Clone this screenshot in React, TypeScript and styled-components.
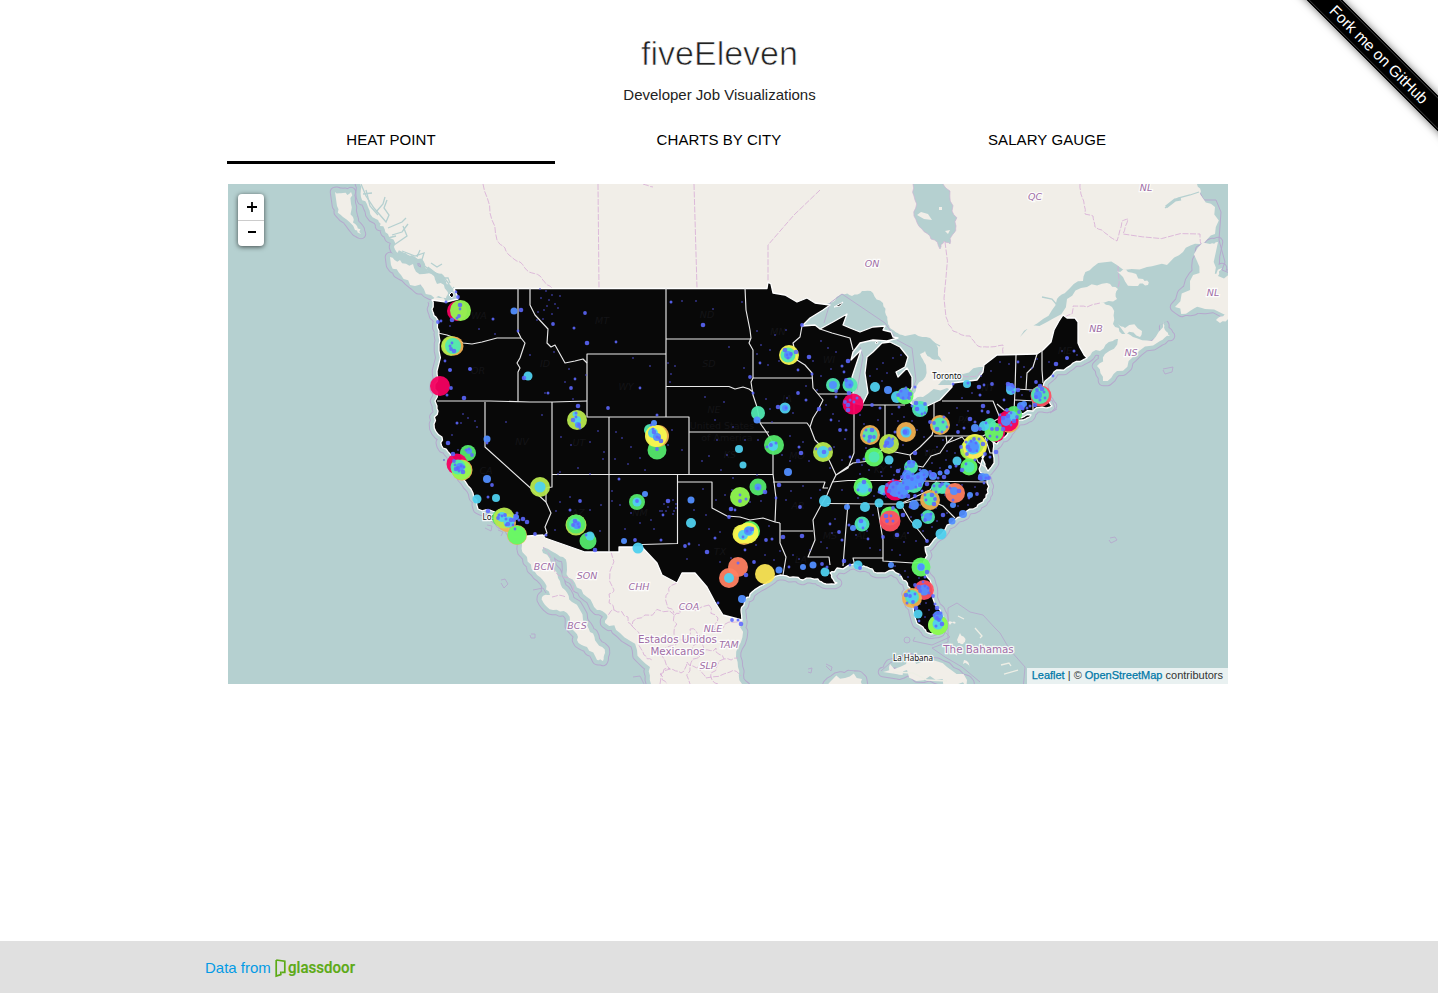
import React from 'react';
import styled, { createGlobalStyle } from 'styled-components';

const GlobalStyle = createGlobalStyle`
  * { box-sizing: border-box; }
  body {
    margin: 0;
    background: #fff;
    color: #222;
    font-family: "Liberation Sans", Arial, sans-serif;
    overflow: hidden;
  }
`;

const Page = styled.div`
  position: relative;
  display: flex;
  flex-direction: column;
  height: 993px;
  overflow: hidden;
`;

const Header = styled.header`
  display: flex;
  flex-direction: column;
  align-items: center;
  padding: 32px 0 0 1px;
`;

const Title = styled.h1`
  margin: 0;
  font-size: 34px;
  font-weight: 300;
  line-height: 42px;
  -webkit-text-stroke: 0.7px #fff;
`;

const Subtitle = styled.p`
  margin: 11px 0 0;
  font-size: 15px;
  line-height: 20px;
`;

const Tabs = styled.nav`
  display: flex;
  width: 984px;
  height: 48px;
  margin: 11px auto 0;
`;

const Tab = styled.a<{ $active?: boolean }>`
  flex: 1;
  text-align: center;
  font-size: 15px;
  letter-spacing: 0.08px;
  line-height: 48px;
  color: #000;
  border-bottom: 3px solid ${(p) => (p.$active ? '#000' : 'transparent')};
`;

const MapPanel = styled.main`
  position: relative;
  width: 1000px;
  height: 500px;
  margin: 20px 0 0 228px;
  overflow: hidden;
  background: #b5d0d0;
`;

const MapDrawing = styled.svg`
  display: block;
  width: 1000px;
  height: 500px;
`;

const ZoomControl = styled.div`
  position: absolute;
  left: 10px;
  top: 10px;
  width: 26px;
  border-radius: 4px;
  background: #fff;
  box-shadow: 0 1px 5px rgba(0, 0, 0, 0.65);
`;

const ZoomButton = styled.div`
  display: flex;
  align-items: center;
  justify-content: center;
  height: 26px;
  padding-left: 1px;
  color: #000;
  & + & {
    border-top: 1px solid #ccc;
    margin-top: -0.5px;
  }
`;

const Attribution = styled.div`
  position: absolute;
  right: 0;
  bottom: 0;
  height: 16px;
  padding: 0 5px;
  background: rgba(255, 255, 255, 0.7);
  color: #333;
  font-size: 11px;
  line-height: 15px;
  white-space: nowrap;
`;

const MapLink = styled.a`
  color: #0078a8;
  -webkit-text-stroke: 0.25px #0078a8;
`;

const Footer = styled.footer`
  display: flex;
  align-items: center;
  height: 52px;
  margin-top: auto;
  padding: 1px 0 0 205px;
  background: #e0e0e0;
  color: #039be5;
  font-size: 15px;
`;

const Logo = styled.svg`
  width: 82px;
  height: 22px;
  margin: 1px 0 0 4px;
`;

const RibbonFrame = styled.div`
  position: absolute;
  top: 0;
  right: 0;
  width: 150px;
  height: 150px;
  overflow: hidden;
`;

const Ribbon = styled.a`
  position: absolute;
  left: -22px;
  top: 42px;
  width: 226px;
  height: 25px;
  transform: rotate(45deg);
  background: #000;
  border: 1px solid #000;
  box-shadow: 0 0 9px rgba(0, 0, 0, 0.6), inset 0 0 0 1px #383838;
  color: #fff;
  font-size: 15.600px;
  line-height: 24px;
  text-align: center;
`;

type Pt = [number, number];
const pts = (s: string): Pt[] => s.trim().split(/\s+/).map((q) => q.split(',').map(Number) as Pt);

const noise = (x: number, y: number) => {
  const v = Math.sin(x * 12.9898 + y * 78.233) * 43758.5453;
  return (v - Math.floor(v)) * 2 - 1;
};

/* Adds two levels of displaced midpoints so that shorelines look natural. */
const crag = (s: string, amount = 0.2): string => {
  let line = pts(s);
  for (let pass = 0; pass < 2; pass += 1) {
    const next: Pt[] = [line[0]];
    for (let i = 1; i < line.length; i += 1) {
      const [ax, ay] = line[i - 1];
      const [bx, by] = line[i];
      const k = noise(ax + bx, ay + by) * amount;
      next.push([(ax + bx) / 2 - (by - ay) * k, (ay + by) / 2 + (bx - ax) * k], [bx, by]);
    }
    line = next;
  }
  return line.map(([x, y]) => `${x.toFixed(1)},${y.toFixed(1)}`).join(' ');
};

const BC = crag('357,170 360,184 361,197 368,207 376,219 380,226 388,234 394,247 402,253 415,257 425,264 435,272 445,280 451,286 454,292 458,299 446,302 432,300', 0.3);
const PACIFIC = crag('432,300 432,309 436,317 439,331 439,344 437,371 435,384 435,401 438,411 434,424 442,437 443,448 452,457 462,478 473,493 478,509 495,512 500,523 508,527 517,537');
const BAJA = crag('517,537 522,545 527,557 535,572 545,583 550,595 542,597 543,602 553,610 567,613 573,630 577,640 587,647 597,660 603,661 605,653 597,643 590,632 583,620 572,602 565,590 558,578 552,567 543,553 543,547');
const SONORA = crag('543,547 553,552 563,557 567,570 575,583 587,597 597,610 607,615 605,623 620,633 637,650 650,667 651,684 655,700');
const MEX_GULF = crag('748,700 742,684 738,667 738,647 740,627 742,620');
const GULF = crag('742,620 741,610 745,600 752,592 763,585 780,575 793,577 803,580 818,579 826,584 837,583 832,578 830,573 837,568 860,567 867,567 877,573 893,570 903,580 910,588 908,600 915,617 923,627 928,633');
const ATLANTIC = crag('928,633 940,632 943,623 940,610 933,593 927,577 923,563 925,547 937,537 952,523 965,515 977,507 983,502 988,493 987,480 980,472 982,460 980,443 984,450 985,464 988,471 993,453 991,440 993,441 997,444 1005,437 1012,427 1023,420 1031,415 1018,417 1013,412 1033,411 1042,407 1052,406 1047,400 1043,395 1043,387 1050,377 1060,370 1073,363 1087,358');
const MARITIMES = crag('1087,358 1100,351 1113,341 1118,339 1105,354 1097,366 1103,381 1117,371 1133,357 1160,341 1170,336 1165,330 1163,321 1152,341 1133,337 1122,334 1113,324 1112,307 1100,302');
const LAURENCE = crag('1100,302 1117,299 1118,289 1107,283 1087,287 1067,299 1047,322 1020,337 1043,319 1057,299 1067,291 1083,281 1093,267 1117,265 1147,267 1167,265 1183,252 1200,244 1215,234 1215,207 1200,194 1197,184 1197,170');
const LAND = `${BC} ${PACIFIC} ${BAJA} ${SONORA} ${MEX_GULF} ${GULF} ${ATLANTIC} ${MARITIMES} ${LAURENCE}`;

const NORTH_SHORES = crag('1087,358 1078,343', 0.1) + ' 1078,322 1075,318 1067,318 1063,315 1059,321 1054,330 1051,342 1043,350 1037,354 997,355 984,365 983,372 977,380 952,383 952,387 940,400 923,408 913,405 908,401 908,395 912,387 912,377 907,368 898,377 896,372 905,367 908,357 900,347 890,342 882,343 873,352 867,357 865,373 868,393 862,405 853,403 853,390 852,377 857,362 861,350 851,360 853,352 860,343 873,340 887,341 898,338 893,337 891,332 883,330 885,326 873,327 860,332 850,328 843,325 847,314 833,322 820,329 815,325 802,326 810,318 823,310 830,305 815,303 807,298 797,302 785,295 773,293 771,284 768,282 767,288.5 454,288.5';
const BORDER_SOUTH = '742,620 723,615 715,602 707,587 695,573 682,573 677,583 662,575 657,563 642,547 619,547 619,552 585,552 545,538 543,535 528,536 517,537';
const USA = `${GULF} ${ATLANTIC} ${NORTH_SHORES} 457,295 458,299 446,302 432,300 ${PACIFIC} ${BORDER_SOUTH.split(' ').reverse().join(' ')}`;

const ISLANDS = [
  '335,192 343,193 351,192 351,204 353,217 357,226 361,234 355,230 343,217 337,206',
  '390,257 400,260 413,264 424,274 437,284 447,291 446,298 431,295 415,286 401,275 391,265',
  '1218,242 1210,244 1197,261 1190,281 1175,307 1190,311 1205,309 1240,312 1240,272 1218,276 1222,268 1208,276 1215,256',
  '1117,271 1128,272 1143,279 1148,285 1138,286 1123,277',
  '1118,324 1125,328 1142,331 1140,337 1126,335',
  '883,672 890,664 907,658 927,662 947,667 967,680 976,690 950,690 930,676 907,670 896,674',
  '822,690 830,682 845,678 862,679 866,690',
  '960,633 965,642 961,644 957,640',
  '1216,320 1225,314 1230,312 1230,318 1220,323',
  '964,660 969,668 963,664',
  '948,622 956,623 950,625',
];

const LAKES = [
  '802,326 815,313 833,302 842,294 852,296 862,291 873,293 883,303 886,315 888,324 893,330 900,337 880,342 820,334',
  '895,332 905,336 915,334 930,338 938,348 942,362 932,359 925,351 920,354 926,365 923,380 913,395 905,395 890,375 888,335',
  '850,340 895,336 885,360 869,410 852,405',
  '911,408 912,400 923,397 947,388 960,387 940,405 923,412',
  '938,385 943,378 963,374 985,367 990,374 970,390 952,385',
];

const BAY = '913,170 913,184 915,200 914,216 922,229 931,239 940,249 944,241 950,244 953,234 956,226 952,211 950,191 943,184 943,170';

const INLETS = [
  '361,184 366,196 374,208 386,222 389,215 384,208 387,200',
  '378,215 370,206 366,190 M388,228 402,222 406,218 M392,235 402,232 408,224 M394,245 407,236 403,226',
  '402,251 415,256 424,253 421,263 432,272 443,276 449,284 M431,263 437,267 442,264 M417,257 420,250',
  '363,194 372,193 M376,212 383,204 385,197 M388,238 396,236 M440,278 448,278 450,283',
];
const RIVERS = ['1042,297 1052,299 1057,305', '1165,208 1178,198 1190,195 1199,192', '940,346 932,342', '454,287 451,292'];

const STATE_LINES = [
  '518,288 518,332 521,338 525,343 520,358 517,363 520,368 518,372 518,401',
  '438,333 447,335 455,338 463,343 472,344 482,342 497,338 521,338',
  '437,401 490,401 530,402 553,402 587,401',
  '530,288 530,305 535,315 548,329 547,343 551,347 555,345 565,363 575,361 583,359 587,363',
  '587,401 587,354 666,354', '587,401 587,417 689,417 689,474.5', '666,288 666,417',
  '552,402 552,487 546,488 546,502 551,513 545,527 547,533 544,536',
  '485,402 485,447 546,502', '552,474.5 773,474.5', '609,417 609,552', '666,339 751,339',
  '666,386.500 729,386.500 735,389 743,387 749,389 753,392', '689,432 769,432',
  '677.500,474 677.500,543.500 642,544.500', '677,482 712,482 712,508 727,516 740,517 750,520 763,518 775,522 780,523',
  '745,288 746,310 750,330 751,338 749,343 753,350 753,378 751,382 753,395 757,407 760,423 767,433 773,443 773,474 776,498 775,522',
  '753,378 812,378', '780,523 780,543 786,557 783,575', '780,531 813,531', '773,482 825,482 823,488 828,488',
  '836,475 832,483 827,495 820,507 813,520 815,540 808,557 829,557 830,565',
  '848,503 845,540 843,566', '827,503.500 877,504 900,504 917,500 930,500 943,506 955,518',
  '832,482 848,480.500 883,480.500 987,482', '760,423 807,423 810,427',
  '802,326 800,337 793,343 797,360 805,365 812,373 813,388 823,400 818,410 813,418 810,427 815,440 822,447 830,462 836,475',
  '818,394 853,394', '820,329 832,333 850,338 853,350', '854,404 854,453 848,468 836,475 853,463 870,461 885,447 895,452 910,455 920,447 932,435 934,428 934,403',
  '862,405 905,405', '885,405 885,442', '934,436 983,436 988,433 992,422 1000,418 993,401 942,401',
  '910,455 912,465 923,467 931,456 940,453 946,444 953,437', '946,436 947,443 955,440 962,437 973,450 978,462 985,467',
  '912,465 900,480', '937,481 930,490 917,496 900,504 903,508 910,520 920,532 927,541',
  '877,504 880,522 883,540 883,561 913,563 922,562', '855,566 853,558 883,558',
  '1016,355 1015,390 1014,412', '1037,354 1033,367 1027,373 1026,389', '1016,389 1033,390 1043,387', '1015,400 1037,401',
  '1033,401 1033,411', '1042,350 1042,370 1043,383', '985,437 990,453 995,453', '1014,412 1004,410 997,404',
];

const PROVINCES = [
  '483,184 490,213 497,240 505,248 509,255 520,262 529,272 540,276 546,284 552,288',
  '598,184 599,288', '694,184 697,288', '820,190 794,215 768,245 768,282',
  '945,242 946,317 953,331 970,336 978,346 987,347 1003,345 1003,354',
  '1080,184 1082,197 1085,214 1093,216 1095,227 1108,235 1117,241 1122,221 1128,219 1123,234 1200,234 1201,244',
  '1065,317 1072,314 1073,306 1087,307 1100,303', '1118,266 1118,288', '963,376 977,376 983,368', '643,184 653,187',
  '611,552 614,590 609,594 614,610 607,615', '614,610 628,617 632,626 645,615 670,611 674,616 682,607 709,605',
  '677,583 669,592 668,608 674,613', '552,597 566,597', '632,626 640,642 644,655 652,660', '674,616 674,632 682,640 690,629',
  '709,605 718,618 714,630 729,622 742,622', '690,629 700,636 704,650 716,648 724,659 738,658', '660,684 670,669 681,673 687,662 700,666 706,678 730,672 741,676',
  '543,547 552,560 564,577 573,592', '700,636 692,650 700,657 690,666 690,684', '678,640 663,650 670,669 660,674 667,684', '718,684 711,673 724,659',
];

const OUTLINES = [
  '932,648 948,642 948,608 957,603 970,612 983,615 995,628 1000,633 1010,650 1025,667 1023,690',
  '932,648 945,657 962,667 980,682', '881,671 890,663 903,656', '930,637 945,632 950,637 932,645 913,641 915,637',
  '842,294 885,323 895,337', '842,294 830,303 824,323', '860,347 863,357 857,390', '897,340 912,348 916,380 910,396',
  '501,580 505,579 508,584 504,588 501,583', '531,634 535,634 535,638 531,638 530,635', '487,525 492,526 491,531 485,528', '498,530 503,532 501,536',
  '633,677 640,676 644,684', '808,669 812,668 811,673 808,672', '826,664 832,667 831,671 826,666', '1110,538 1115,537 1117,540 1111,543 1109,540',
  '1163,369 1173,367 1172,372 1165,374 1163,370', '1043,405 1052,400 1055,408 1050,413 1057,409', '533,590 543,588 546,593',
];

const COLORS: Record<string, string> = {
  b: '#5c68ff', s: '#518eff', c: '#4fd0ee', t: '#50e8b0', g: '#54e96c', l: '#91f951',
  y: '#b7e84e', Y: '#f6f84f', o: '#f0b050', O: '#ff8061', r: '#ff5061', p: '#f50060', G: '#63fb66', u: '#fbe655',
};

/* colour key, x, y, radius */
const HEAT = `
p,457,311,10 l,460.500,310.500,10.500 y,451,346,10 o,454,346,9.500 y,451,346,9 t,453,346,8 p,440,386,10 y,577,420,10 c,577,420,4 c,575,414,2.500 s,578,425,3
g,468,453,8 s,469,451,3 p,457,464,10.500 o,462,470,10.500 l,461.500,470,10 t,458,467,7.500 s,460,467,4 y,540,487,10 c,540,487,5.500
g,500,518,8 o,507,523,9 y,504,518,10.500 c,502,517,5 c,509,522,5.500 s,516,517,3 o,517,535,10 G,517,535,9.500
y,576,525,10.500 g,576,524,9.500 t,575,524,6 s,577,525,4 g,588,541,8.500 c,590,536,4.500 g,637,502,8 c,637,502,4.500 c,638,548,5.500
t,650,430,6 g,657,450,9.500 o,658,436,11 Y,656,436,11 c,653,433,5 s,657,437,4
Y,789,355,10 t,788,355,7.500 s,788,355,4 t,758,413,7 c,785,408,5.500 s,785,408,3 c,528,376,4.500 c,477,499,4.500 c,496,498,4 s,487,479,4 s,487,439,3.500
g,774,445,10 c,773,446,5 y,823,452,10 c,823,452,6 c,739,449,4 c,743,465,3.500 s,788,472,4
l,740,497,10 g,758,487,8.500 s,758,487,3.500 G,750,531,10 o,744,535,10 Y,748,533,10.500 Y,742,534,9.500 c,743,535,5 c,749,531,5 s,748,531,4
O,738,567,10 O,729,578,10 c,729,578,5 u,765,574,10 c,691,523,5 s,691,500,3.500 c,825,501,6 s,779,570,3.500 s,742,599,4 s,813,565,3.500 c,825,572,4.500 s,803,567,3
t,833,385,7 s,833,385,4 t,850,385,7.500 s,849,384,4.500 p,853,404,10.500 c,875,387,5 s,888,390,4 c,897,397,6 G,905,396,8.500 s,904,394,6 t,920,409,8 c,920,409,5
o,870,435,10 t,870,435,7.500 o,906,432,10 c,906,432,5.500 s,906,432,3.500 o,940,425,10 t,940,425,7.500 y,889,444,10 s,889,443,5
G,874,457,9.500 t,874,457,5.500 c,889,460,4.500 t,911,467,7 s,911,464,4 G,863,487,9.500 t,863,488,7 c,863,488,5 c,883,490,5 p,895,490,10.500 t,904,488,7 t,914,484,9 c,917,481,7 s,910,482,8 s,896,489,8 s,902,493,6 s,920,478,6
c,879,503,4.500 c,900,505,4 s,914,505,5 t,937,488,6 c,946,488,6 t,942,489,5 o,930,500,10 t,930,499,6.500 s,953,505,3 O,955,493,10 s,954,491,4
c,865,507,5 G,890,516,9.500 r,890,521,10.500 t,862,524,7.500 c,862,524,4.500 s,853,528,3 t,928,517,7 s,928,517,4 c,917,524,5 c,941,534,5.500 s,952,521,3.500 s,963,514,4 s,970,495,3
c,858,565,4.500 s,891,565,3 G,921,567,9.500 c,921,567,4 s,921,567,3.500 r,924,590,10 s,924,590,5.500 o,912,598,10 t,912,597,7 c,912,597,5.500 c,918,614,4.500 G,938,625,10 l,938,625,10 c,938,624,5.500 s,938,616,5
l,970,450,10 y,972,449,11 Y,975,446,12 u,973,450,9 y,975,445,9 c,973,447,7.500 s,973,447,6 G,969,467,8.500 t,969,467,5.500 c,957,461,4.500
g,1014,414,8 o,1009,423,10 p,1008,421,10.500 p,996,433,9 G,994,432,9.500 t,990,424,6 c,984,426,5 s,975,428,4 c,1012,416,5 s,1006,421,5 c,1011,390,5 s,1010,387,4 c,967,384,4 r,1041,396,10.500 t,1040,395,9 s,1038,395,4
s,514,311,3.500 s,645,494,3 s,624,541,3 s,654,423,3 b,450,370,2 b,470,369,2 s,757,420,3.500 s,847,507,3 s,1021,406,4 s,1024,404,3 b,1067,358,2
s,924,474,5 s,933,476,4 s,907,475,5 s,947,472,2.800 s,940,473,2.500 s,950,467,2 s,982,477,4 s,986,477,3.500
`;

const BLUE = `
456,292 458,297 446,302 460,305 460,309 459,316 457,318 452,320 441,321 438,322 493,319 521,310 518,331 585,313 574,328 587,343 616,342 553,324 671,302 703,325 445,361 451,388 447,395 464,398 575,379 571,388 548,393 524,378 640,388 608,408 657,415 578,406 576,417 579,425 457,423 448,443 469,449 472,455 466,450 453,454 455,465 458,468 461,466 463,472 487,443 492,485 488,497 488,511 502,516 498,518 506,519 508,524 513,525 516,516 519,520 527,522 515,529 535,534 546,535 575,521 578,524 580,501 570,510 595,550 586,535 637,501 657,437 654,432 659,438 657,449 619,479 668,501 663,515 635,540 661,540
785,350 787,355 791,354 788,358 796,352 760,363 750,377 753,393 778,407 786,408 798,393 806,400 809,357 798,370 802,325 812,374 819,409 831,420 840,430 846,430 824,452 816,449 830,449 799,447 801,453 767,447 771,445 776,443 779,485 776,498 800,507 758,488 765,492 740,495 740,501 746,499 731,509 735,510 729,517 747,531 752,529 743,537 766,540 772,539 783,537 745,550 754,562 715,538 707,552 689,544 685,546 738,563 746,575 718,603 732,620 738,620 741,624 830,524 839,532 842,540 802,536 789,567 822,564 827,567 844,561 850,565 860,568
842,366 848,361 844,372 846,380 850,385 849,393 836,397 836,391 850,400 848,405 854,402 872,405 880,408 870,437 864,436 869,441 889,438 887,443 893,439 885,446 895,432 905,432 912,406 925,404 899,407 910,394 903,398 898,395 915,387 917,409 925,413 930,422 943,422 937,429 947,427 958,432 964,428 970,419 982,411 988,412 953,384 979,387 984,385 992,384 980,395 983,406 1004,400 1012,385 1013,392 1018,390 1018,362 1021,407 1030,406 1035,405 1045,398 1037,390 1040,400 1042,389 1053,376 1036,382 1074,351 1056,364
976,443 970,450 979,439 968,447 987,440 992,429 1000,425 1008,416 1011,425 1017,417 1023,409 1003,429 997,437 961,447 956,466 962,470 966,464 947,471 940,473 933,475 924,475 918,477 913,474 908,477 903,483 897,483 893,487 889,491 902,496 915,496 922,491 927,484 934,486 942,484 950,488 959,491 969,498 977,494 986,478 980,478 984,483 989,478 990,457 932,495 926,500 935,499 953,500 943,515 922,515 925,520 931,514 886,516 891,516 887,521 893,521 897,535 868,539 883,537 849,525 903,515 910,507 893,508 879,492 864,482 858,490 870,490 864,459 858,461 850,457 909,462 914,462 915,453 906,467
927,541 925,577 927,572 923,582 915,585 929,593 919,587 909,591 913,602 907,603 916,608 919,621 933,596 935,604 937,608 941,613 937,618 936,626 942,624 925,586 910,596 968,383 996,452 975,460 985,454 966,442 1014,421 1000,415 1007,410
450,346 454,351 452,343 451,349 576,413 573,420 580,428 454,461 459,471 456,469 464,467 505,515 499,515 511,520 506,525 514,520 517,513 523,519 579,527 573,525 653,429 661,441 651,425 845,402 857,398 848,410 906,388 909,398 901,391 898,471 905,471 912,479 916,487 907,488 899,493 887,485 884,494 920,485 925,479 930,472 938,478 944,477 920,470 902,477 893,480 908,496 936,492 940,486 947,486 934,504 925,495 967,454 971,441 983,444 977,451 974,439 990,436 997,429 986,423 980,429 975,422 1003,418 1011,413 1019,412 1027,408 1008,384 1014,387 1036,397 1044,392 1040,386 942,432 934,423 944,417 916,403 922,414 874,437 866,430 872,430 938,613 939,620 934,615 906,595 915,594 920,591 928,588 861,521 863,528
`;

const FAINT = `
450,326 479,329 495,334 540,289 546,291 552,295 549,300 555,304 544,310 538,312 552,314 543,319 537,320 558,308 541,298 547,306 560,296 530,355 554,352 545,393 573,399 565,382 586,375 569,369 650,366 633,358 668,363 675,366 671,374 682,301 696,301 713,309 742,302 757,331 729,347 744,368 670,382 463,414 468,418 461,423 475,421 477,427 452,435 458,450 444,460 506,422 542,415 561,437 571,445 590,442 598,431 604,452 616,432 622,438 631,447 640,458 628,464 645,470 615,459 672,430 668,445 682,450 560,472 558,474 578,468 590,474 603,459 570,497 560,502 556,511 590,510 601,505 584,525 600,531 555,530 612,501 620,505 612,491 631,513 640,523 625,529 651,520 654,529 660,511 664,504 668,507 662,511 666,511 674,511 673,500 676,504 676,508 673,514 694,510 706,515 703,489 716,500 725,495 732,490 750,502 761,501 720,532 709,529 699,545 687,559 720,562 731,558 756,545 765,555 774,560 769,526 786,500 791,491 803,486 820,490 811,498 842,490 835,519 827,548 821,542 832,533 810,550 793,555 799,559 780,551
757,354 761,345 770,350 768,365 779,361 786,330 775,335 813,361 821,341 828,348 836,352 831,369 821,376 826,405 833,414 839,421 845,439 834,447 842,460 830,468 809,461 803,442 790,436 782,455 790,461 772,422 793,413 766,399 770,409 787,398 817,390 806,386 745,440 717,440 709,456 702,461 727,455 715,420 724,402 705,397 733,427 758,440 721,470 733,478 757,475
860,415 864,424 878,420 892,414 898,421 904,417 912,421 917,430 924,437 903,445 896,442 866,448 880,449 862,465 869,470 881,472 891,467 900,469 894,475 882,476 860,474 858,498 874,496 886,497 897,497 909,498 920,505 936,508 945,495 962,485 975,487 940,468 946,460 955,453 932,463 927,451 937,447 947,451 943,440 957,425 968,411 957,408 949,413 962,398 972,393 981,376 991,371 1000,362 1009,364 1024,367 1021,377 1032,368 1037,359 1049,362 1062,351 1077,355 1022,395 1030,391
873,515 867,531 856,535 870,548 880,550 892,550 900,555 904,542 908,533 916,541 923,531 911,517 932,527 937,521 947,513 958,506 968,505 895,566 905,571 916,573 908,577 919,578 926,603 920,604 929,610 925,617 931,622 900,575 893,358 901,355 883,363 887,373 882,381 877,369 870,376
`;

const STATES: [string, number, number][] = [
  ['WA', 479, 319], ['OR', 478, 374], ['ID', 545, 367], ['MT', 602, 324], ['WY', 626, 390], ['ND', 707, 318], ['SD', 709, 367], ['NE', 714, 413],
  ['MN', 778, 335], ['WI', 829, 363], ['IA', 787, 402], ['KS', 730, 458], ['MO', 797, 459], ['NV', 522, 445], ['UT', 579, 446], ['CA', 486, 474],
  ['AZ', 578, 516], ['NM', 640, 516], ['TX', 720, 555], ['AR', 798, 509], ['LA', 801, 563], ['MS', 830, 539], ['AL', 862, 539], ['GA', 900, 539],
  ['KY', 880, 473], ['WV', 932, 456], ['PA', 964, 423], ['NY', 988, 391], ['ME', 1065, 354],
];
const REGIONS: [string, number, number][] = [
  ['QC', 1035, 200], ['NL', 1146, 191], ['ON', 872, 267], ['NB', 1096, 332], ['NS', 1131, 356], ['NL', 1213, 296], ['BCN', 544, 570],
  ['SON', 587, 579], ['CHH', 639, 590], ['BCS', 577, 629], ['COA', 689, 610], ['NLE', 713, 632], ['TAM', 729, 648], ['SLP', 708, 669],
];

const Region = styled.text`
  font: italic 9.500px "DejaVu Sans", sans-serif;
  text-anchor: middle;
  fill: #a06ea6;
  stroke: #fff;
  stroke-width: 2.500px;
  stroke-opacity: 0.85;
  paint-order: stroke;
`;
const Country = styled(Region)`
  font: 10.300px "DejaVu Sans", sans-serif;
`;
const City = styled(Region)`
  font: 8px "Noto Sans", sans-serif;
  fill: #111;
`;
const StateName = styled.text`
  font: italic 9.500px "DejaVu Sans", sans-serif;
  text-anchor: middle;
  fill: #141417;
`;
const CountryName = styled(StateName)`
  font-style: normal;
`;

const heatSpots = HEAT.trim().split(/\s+/).map((e) => e.split(','));

const MapArt = () => (
  <MapDrawing viewBox="228 184 1000 500">
    <g fill="none" strokeLinejoin="round">
      {[['#b5a8cd', 10.5], ['#b5d0d0', 8.5]].map(([stroke, width]) => (
        <g key={width} stroke={stroke} strokeWidth={width}>
          <path d={`M${BC}`} />
          <path d={`M${PACIFIC} ${BAJA} ${SONORA}`} />
          <path d={`M${MEX_GULF} ${GULF} ${ATLANTIC} ${MARITIMES.split(' ').slice(0, 48).join(' ')}`} />
          {ISLANDS.slice(0, 3).map((d) => <path key={d} d={`M${crag(d)}Z`} />)}
          {ISLANDS.slice(5, 7).map((d) => <path key={d} d={`M${crag(d)}Z`} />)}
        </g>
      ))}
      <path d="M1195,184 1204,200 1216,200 1221,212 1219,240 1225,262 1222,270 1232,274" stroke="#b5a8cd" />
    </g>
    <path d={`M${LAND}Z`} fill="#f1eee8" />
    {ISLANDS.map((d) => <path key={d} d={`M${crag(d, 0.35)}Z`} fill="#f1eee8" />)}
    <g fill="#b5d0d0">
      {LAKES.map((d) => <path key={d} d={`M${crag(d, 0.15)}Z`} />)}
      <path d={`M${crag(BAY)}Z`} stroke="#cdb5d4" strokeWidth=".7" />
    </g>
    <path d="M917,215 921,212 928,214 932,220 924,219Z M939,207h3v3h-3z M945,231l5-1-2 4z" fill="#f1eee8" />
    <g fill="none" stroke="#b5d0d0" strokeWidth="1.3">
      {INLETS.map((d) => <path key={d} d={`M${d}`} />)}
      {RIVERS.map((d) => <path key={d} d={`M${d}`} />)}
      <path d="M398,252 410,258 M427,268 437,276 445,283" strokeWidth="4" />
      <path d="M1166,207 1175,200 1181,199" strokeWidth="3" />
    </g>
    <g fill="none" stroke="#d7abd6" strokeWidth=".8" strokeDasharray="6 1.5">
      {PROVINCES.map((d, i) => (
        <path key={d} d={`M${i > 0 && i < 4 ? d : crag(d, i < 10 ? 0.08 : 0.25)}`} />
      ))}
    </g>
    <g fill="none" stroke="#b5a8cd" strokeWidth=".9">
      {OUTLINES.map((d) => <path key={d} d={`M${d}`} />)}
      <circle cx="907" cy="640" r="3" />
    </g>
    <path d="M958,616l6,3 M975,628l7,8-2,2 M984,645l6,8 M1001,665l8-2 2,3 M1004,674l14-4 M893,672l20,1 14,7 20,1 M957,655l-4-4" fill="none" stroke="#edeee5" strokeWidth="1.3" />
    <path d={`M${USA}Z`} fill="#080808" stroke="#fff" strokeWidth="1.3" strokeLinejoin="round" />
    <path d="M834,307 843,302 840,306Z M875,343l2,-2 1,2z M449,295l3-3 2,3-2,3z" fill="#080808" stroke="#fff" />
    {STATES.map(([name, x, y]) => <StateName key={name} x={x} y={y}>{name}</StateName>)}
    <CountryName x="722" y="429">United States</CountryName>
    <CountryName x="727" y="441">of America</CountryName>
    <g fill="none" stroke="#e9e9e9" strokeWidth="1.15" strokeLinejoin="round">
      {STATE_LINES.map((d) => <path key={d} d={`M${d}`} />)}
    </g>
    {REGIONS.map(([name, x, y]) => <Region key={`${name}${x}`} x={x} y={y}>{name}</Region>)}
    <Country x="677.500" y="643">Estados Unidos</Country>
    <Country x="677.500" y="655">Mexicanos</Country>
    <Country x="978.500" y="653">The Bahamas</Country>
    <City x="947" y="379">Toronto</City>
    <City x="913" y="661">La Habana</City>
    <City x="489" y="520">Los</City>
    <g fill="#4b4bd0" fillOpacity=".48">
      {pts(FAINT).map(([x, y], i) => <rect key={i} x={x - 1} y={y - 1} width="2" height="2" />)}
    </g>
    {heatSpots.map(([c, x, y, r], i) => <circle key={i} cx={x} cy={y} r={r} fill={COLORS[c]} fillOpacity=".95" />)}
    <g fill="#5c68ff" fillOpacity=".88">
      {pts(BLUE).map(([x, y], i) => <circle key={i} cx={x} cy={y} r={[1.4, 1.9, 1.5, 2.3][i % 4]} />)}
    </g>
  </MapDrawing>
);

export default function App() {
  return (
    <>
      <GlobalStyle />
      <Page>
        <Header>
          <Title>fiveEleven</Title>
          <Subtitle>Developer Job Visualizations</Subtitle>
        </Header>
        <Tabs>
          <Tab $active>HEAT POINT</Tab>
          <Tab>CHARTS BY CITY</Tab>
          <Tab>SALARY GAUGE</Tab>
        </Tabs>
        <MapPanel>
          <MapArt />
          <ZoomControl>
            <ZoomButton>
              <svg width="10" height="10" viewBox="0 0 10 10" stroke="#000" strokeWidth="1.8"><path d="M5 0v10M0 5h10" /></svg>
            </ZoomButton>
            <ZoomButton>
              <svg width="8" height="10" viewBox="0 0 8 10" stroke="#000" strokeWidth="2"><path d="M0 4h8" /></svg>
            </ZoomButton>
          </ZoomControl>
          <Attribution>
            <MapLink>Leaflet</MapLink> | © <MapLink>OpenStreetMap</MapLink> contributors
          </Attribution>
        </MapPanel>
        <Footer>
          <span>Data from</span>
          <Logo viewBox="0 0 82 22">
            <path d="M1.200 3 9.800 4.200V15.300H6.800M1.200 3V19L5.800 17.600V14.500" fill="none" stroke="#5caa15" strokeWidth="1.700" />
            <text x="13" y="15.500" textLength="67" lengthAdjust="spacingAndGlyphs" fontFamily="Roboto, sans-serif" fontWeight="500" fontSize="16" fill="#5caa15" stroke="#5caa15" strokeWidth=".2">glassdoor</text>
          </Logo>
        </Footer>
        <RibbonFrame>
          <Ribbon>Fork me on GitHub</Ribbon>
        </RibbonFrame>
      </Page>
    </>
  );
}
